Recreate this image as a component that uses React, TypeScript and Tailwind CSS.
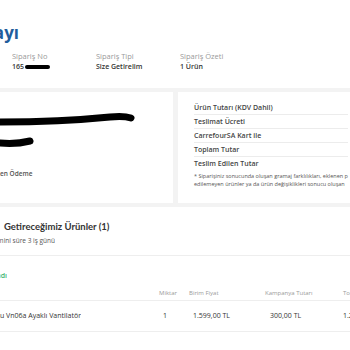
import React from 'react'

const font = { fontFamily: '"Open Sans", Lato, sans-serif' }

function Tail({ w, children, className }: { w: number; children: React.ReactNode; className?: string }) {
  // shows only the end of text that runs off the left edge
  return (
    <div className={'flex shrink-0 justify-end overflow-hidden whitespace-nowrap ' + (className ?? '')} style={{ width: w }}>
      {children}
    </div>
  )
}

const summaryRows = [
  'Ürün Tutarı (KDV Dahil)',
  'Teslimat Ücreti',
  'CarrefourSA Kart ile',
  'Toplam Tutar',
  'Teslim Edilen Tutar',
]

export default function App() {
  return (
    <div className="w-[350px] h-[350px] overflow-hidden bg-white text-[#333]" style={font}>
      {/* ── Header ─────────────────────────────── */}
      <div className="h-[88px] bg-white pt-[22px]">
        <Tail w={19} className="text-[17px] font-bold leading-[22px] text-[#1f5d9c]">
          Sipariş Detayı
        </Tail>
        <div className="mt-[8px] flex pl-[12px] text-[7.5px] leading-[9px]">
          <div className="w-[84px] shrink-0">
            <div className="text-[#9a9a9a]">Sipariş No</div>
            <div className="mt-[1px] flex items-center text-[7px] font-semibold">
              165
              <span className="ml-[1px] inline-block h-[4px] w-[25px] rounded-full bg-black" />
            </div>
          </div>
          <div className="w-[84px] shrink-0">
            <div className="text-[#9a9a9a]">Sipariş Tipi</div>
            <div className="mt-[1px] text-[7px] font-semibold">Size Getirelim</div>
          </div>
          <div>
            <div className="text-[#9a9a9a]">Sipariş Özeti</div>
            <div className="mt-[1px] text-[7px] font-semibold">1 Ürün</div>
          </div>
        </div>
      </div>

      {/* ── Cards ──────────────────────────────── */}
      <div className="flex gap-[5px] bg-[#f3f3f3] pt-[4px] pb-[4px]">
        <div className="h-[111px] w-[173px] shrink-0 bg-white">
          <svg width="173" height="50" viewBox="0 0 173 50" className="mt-[17px]">
            <path d="M0 13 C40 13 80 11 110 8 C120 7 128 8 131 9" stroke="#000" strokeWidth="7" strokeLinecap="round" fill="none" />
            <path d="M0 34 C10 35 22 34 30 32" stroke="#000" strokeWidth="7" strokeLinecap="round" fill="none" />
          </svg>
          <div className="mt-[10px] text-[6.5px] font-semibold leading-[10px] text-[#555]">en Ödeme</div>
        </div>
        <div className="h-[111px] flex-1 bg-white px-[16px] pt-[9px]">
          {summaryRows.map((r, i) => (
            <div
              key={r}
              className={
                'h-[14px] text-[7px] font-semibold leading-[14px] text-[#444] ' +
                (i < summaryRows.length - 1 ? 'border-b border-[#ececec]' : '')
              }
            >
              {r}
            </div>
          ))}
          <div className="mt-[1px] whitespace-nowrap text-[5.5px] leading-[8px] text-[#555]">
            <div>* Siparişiniz sonucunda oluşan gramaj farklılıkları, eklenen p</div>
            <div>edilemeyen ürünler ya da ürün değişiklikleri sonucu oluşan</div>
          </div>
        </div>
      </div>

      {/* ── Products ───────────────────────────── */}
      <div className="bg-white">
        <div className="border-b border-[#eeeeee] pt-[13px] pb-[9px]">
          <div
            className="pl-[4px] text-[9.5px] font-bold leading-[13px] text-[#333]"
            style={{ fontFamily: 'Lato, "Open Sans", sans-serif' }}
          >
            Getireceğimiz Ürünler (1)
          </div>
          <Tail w={55} className="mt-[3px] text-[6.5px] leading-[10px] text-[#555]">
            Tahmini süre 3 iş günü
          </Tail>
        </div>
        <Tail w={7} className="mt-[15px] text-[7px] font-semibold leading-[10px] text-[#3cb371]">
          Onaylandı
        </Tail>
        <div className="mt-[6px] flex h-[14px] items-center border-b border-[#eeeeee] text-[6px] text-[#9a9a9a]">
          <div className="w-[159px] shrink-0" />
          <div className="w-[30px] shrink-0">Miktar</div>
          <div className="w-[76px] shrink-0">Birim Fiyat</div>
          <div className="w-[78px] shrink-0">Kampanya Tutarı</div>
          <div className="whitespace-nowrap">Toplam</div>
        </div>
        <div className="flex h-[31px] items-center border-b border-[#eeeeee] text-[7px] text-[#333]">
          <Tail w={81}>Arzum Aksu Vn06a Ayaklı Vantilatör</Tail>
          <div className="w-[78px] shrink-0" />
          <div className="w-[30px] shrink-0 pl-[4px]">1</div>
          <div className="w-[77px] shrink-0 pl-[4px]">1.599,00 TL</div>
          <div className="w-[77px] shrink-0 pl-[4px]">300,00 TL</div>
          <div className="whitespace-nowrap">1.299,00 TL</div>
        </div>
      </div>
    </div>
  )
}
